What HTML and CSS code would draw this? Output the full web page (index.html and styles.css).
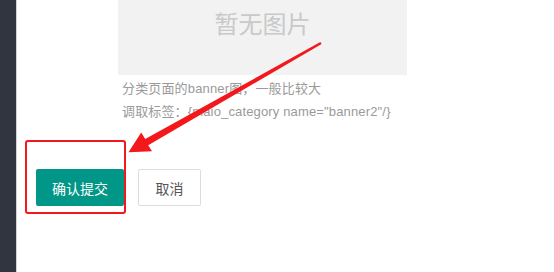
FILE: index.html
```html
<!DOCTYPE html>
<html lang="zh-CN">
<head>
<meta charset="utf-8">
<title>banner</title>
<link rel="stylesheet" href="styles.css">
</head>
<body>
<div class="layout">
  <aside class="sidebar"></aside>
  <main class="main">
    <div class="field">
      <div class="preview"><span class="preview-text">暂无图片</span></div>
      <div class="tips">
        <p class="tip">分类页面的banner图，一般比较大</p>
        <p class="tip">调取标签：{maio_category name="banner2"/}</p>
      </div>
    </div>
    <div class="actions">
      <button class="btn btn-primary" type="button">确认提交</button>
      <button class="btn btn-default" type="button">取消</button>
    </div>
  </main>
</div>
<div class="highlight"></div>
<svg class="arrow" width="554" height="272" viewBox="0 0 554 272" xmlns="http://www.w3.org/2000/svg">
  <polygon fill="#f2181c" points="320.4,42.1 145.2,139.0 141.2,132.6 128.5,152.3 152.0,151.2 148.2,145.2 321.6,43.9"/>
</svg>
</body>
</html>
```
FILE: styles.css
```css
html, body {
  margin: 0;
  padding: 0;
  background: #ffffff;
  font-family: "Liberation Sans", "Noto Sans CJK SC", sans-serif;
}

.layout {
  display: flex;
  height: 272px;
  overflow: hidden;
}

.sidebar {
  width: 16px;
  flex: none;
  background: #31353f;
  border-right: 1px solid #cfd1d4;
}

.main {
  flex: 1;
  display: flex;
  flex-direction: column;
}

.field {
  margin-left: 101px;
}

.preview {
  width: 289px;
  height: 75px;
  background: #f2f2f2;
  display: flex;
  justify-content: center;
  box-sizing: border-box;
  padding-top: 10px;
}

.preview-text {
  font-size: 24px;
  line-height: 30px;
  color: #c9c9c9;
}

.tips {
  padding-top: 2px;
  padding-left: 4px;
}

.tip {
  margin: 0;
  font-size: 13px;
  line-height: 23px;
  color: #9a9a9a;
  white-space: nowrap;
  letter-spacing: 0.15px;
}

.actions {
  display: flex;
  gap: 14px;
  margin-top: 46px;
  margin-left: 19px;
}

.btn {
  height: 37px;
  box-sizing: border-box;
  font-family: inherit;
  font-size: 14px;
  border-radius: 2px;
  padding: 0;
  cursor: pointer;
}

.btn-primary {
  width: 88px;
  background: #009688;
  color: #ffffff;
  border: none;
}

.btn-default {
  width: 63px;
  background: #ffffff;
  color: #555555;
  border: 1px solid #dcdcdc;
}

.highlight {
  position: absolute;
  left: 25px;
  top: 140px;
  width: 101px;
  height: 74px;
  box-sizing: border-box;
  border: 2.5px solid #f2181c;
  border-radius: 3px;
}

.arrow {
  position: absolute;
  left: 0;
  top: 0;
  pointer-events: none;
}
```
